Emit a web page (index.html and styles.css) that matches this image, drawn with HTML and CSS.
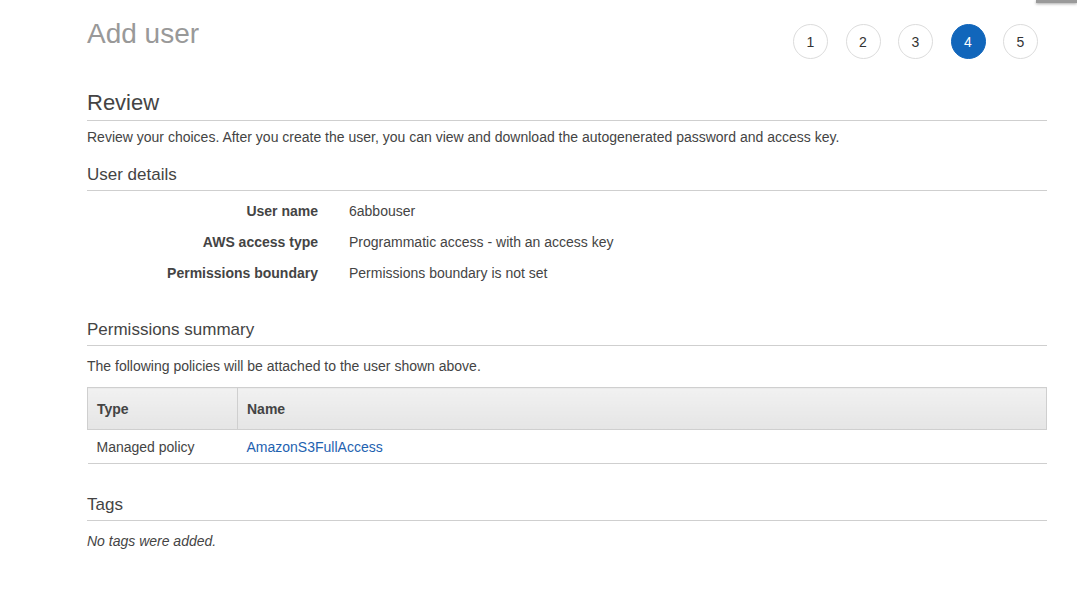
FILE: index.html
```html
<!DOCTYPE html>
<html lang="en">
<head>
<meta charset="utf-8">
<title>Add user</title>
<link rel="stylesheet" href="styles.css">
</head>
<body>
<div class="corner-menu"></div>
<main class="page">
  <header class="wizard-head">
    <h1 class="title">Add user</h1>
    <ol class="steps">
      <li class="step">1</li>
      <li class="step">2</li>
      <li class="step">3</li>
      <li class="step step-active">4</li>
      <li class="step">5</li>
    </ol>
  </header>

  <section class="review">
    <h2 class="review-title">Review</h2>
    <p class="review-desc">Review your choices. After you create the user, you can view and download the autogenerated password and access key.</p>
  </section>

  <section class="section section-details">
    <h3 class="section-title">User details</h3>
    <dl class="details">
      <dt class="details-label">User name</dt>
      <dd class="details-value">6abbouser</dd>
      <dt class="details-label">AWS access type</dt>
      <dd class="details-value">Programmatic access - with an access key</dd>
      <dt class="details-label">Permissions boundary</dt>
      <dd class="details-value">Permissions boundary is not set</dd>
    </dl>
  </section>

  <section class="section section-perms">
    <h3 class="section-title">Permissions summary</h3>
    <p class="perms-desc">The following policies will be attached to the user shown above.</p>
    <table class="policy-table">
      <thead>
        <tr>
          <th class="col-type">Type</th>
          <th class="col-name">Name</th>
        </tr>
      </thead>
      <tbody>
        <tr>
          <td class="col-type">Managed policy</td>
          <td class="col-name"><a class="policy-link" href="#">AmazonS3FullAccess</a></td>
        </tr>
      </tbody>
    </table>
  </section>

  <section class="section section-tags">
    <h3 class="section-title">Tags</h3>
    <p class="tags-empty">No tags were added.</p>
  </section>
</main>
</body>
</html>
```

FILE: styles.css
```css
html, body {
  margin: 0;
  padding: 0;
  background: #fff;
}

body {
  font-family: "Liberation Sans", Arial, sans-serif;
  font-size: 14px;
  line-height: 20px;
  color: #444;
}

.corner-menu {
  position: absolute;
  top: 0;
  right: 0;
  width: 41px;
  height: 3px;
  background: #9a9a9a;
  box-shadow: 0 1px 3px rgba(0, 0, 0, 0.35);
}

.page {
  width: 960px;
  margin-left: 87px;
}

.wizard-head {
  display: flex;
  justify-content: space-between;
  align-items: flex-start;
  padding-top: 18px;
}

.title {
  margin: 0;
  font-size: 28px;
  line-height: 32px;
  font-weight: normal;
  color: #999;
}

.steps {
  display: flex;
  gap: 17.5px;
  list-style: none;
  margin: 6px 9px 0 0;
  padding: 0;
}

.step {
  width: 33px;
  height: 33px;
  border: 1px solid #dcdcdc;
  border-radius: 50%;
  display: flex;
  align-items: center;
  justify-content: center;
  font-size: 14px;
  color: #333;
  background: #fff;
}

.step-active {
  background: #1166bb;
  border-color: #1166bb;
  color: #fff;
}

.review-title {
  margin: 31px 0 0;
  padding-bottom: 4px;
  font-size: 22px;
  line-height: 26px;
  font-weight: normal;
  color: #444;
  border-bottom: 1px solid #cfcfcf;
}

.review-desc {
  margin: 6px 0 0;
}

.section-title {
  margin: 0;
  padding-bottom: 4px;
  font-size: 17px;
  line-height: 22px;
  font-weight: normal;
  color: #444;
  border-bottom: 1px solid #cfcfcf;
}

.section-details {
  margin-top: 17px;
}

.details {
  display: grid;
  grid-template-columns: 231px 1fr;
  column-gap: 31px;
  row-gap: 11px;
  margin: 10px 0 0;
}

.details-label {
  text-align: right;
  font-weight: bold;
  color: #444;
}

.details-value {
  margin: 0;
}

.section-perms {
  margin-top: 36px;
}

.perms-desc {
  margin: 10px 0 11px;
}

.policy-table {
  width: 100%;
  border-collapse: collapse;
}

.policy-table th {
  height: 41px;
  padding: 0 9px;
  text-align: left;
  font-weight: bold;
  color: #444;
  background: linear-gradient(#f1f1f1, #e5e5e5);
  border: 1px solid #cfcfcf;
}

.policy-table td {
  height: 33px;
  padding: 0 9px;
  border-bottom: 1px solid #cfcfcf;
}

.policy-table .col-type {
  width: 131px;
}

.policy-link {
  color: #1e62b0;
  text-decoration: none;
}

.section-tags {
  margin-top: 30px;
}

.tags-empty {
  margin: 10px 0 0;
  font-style: italic;
}
```
